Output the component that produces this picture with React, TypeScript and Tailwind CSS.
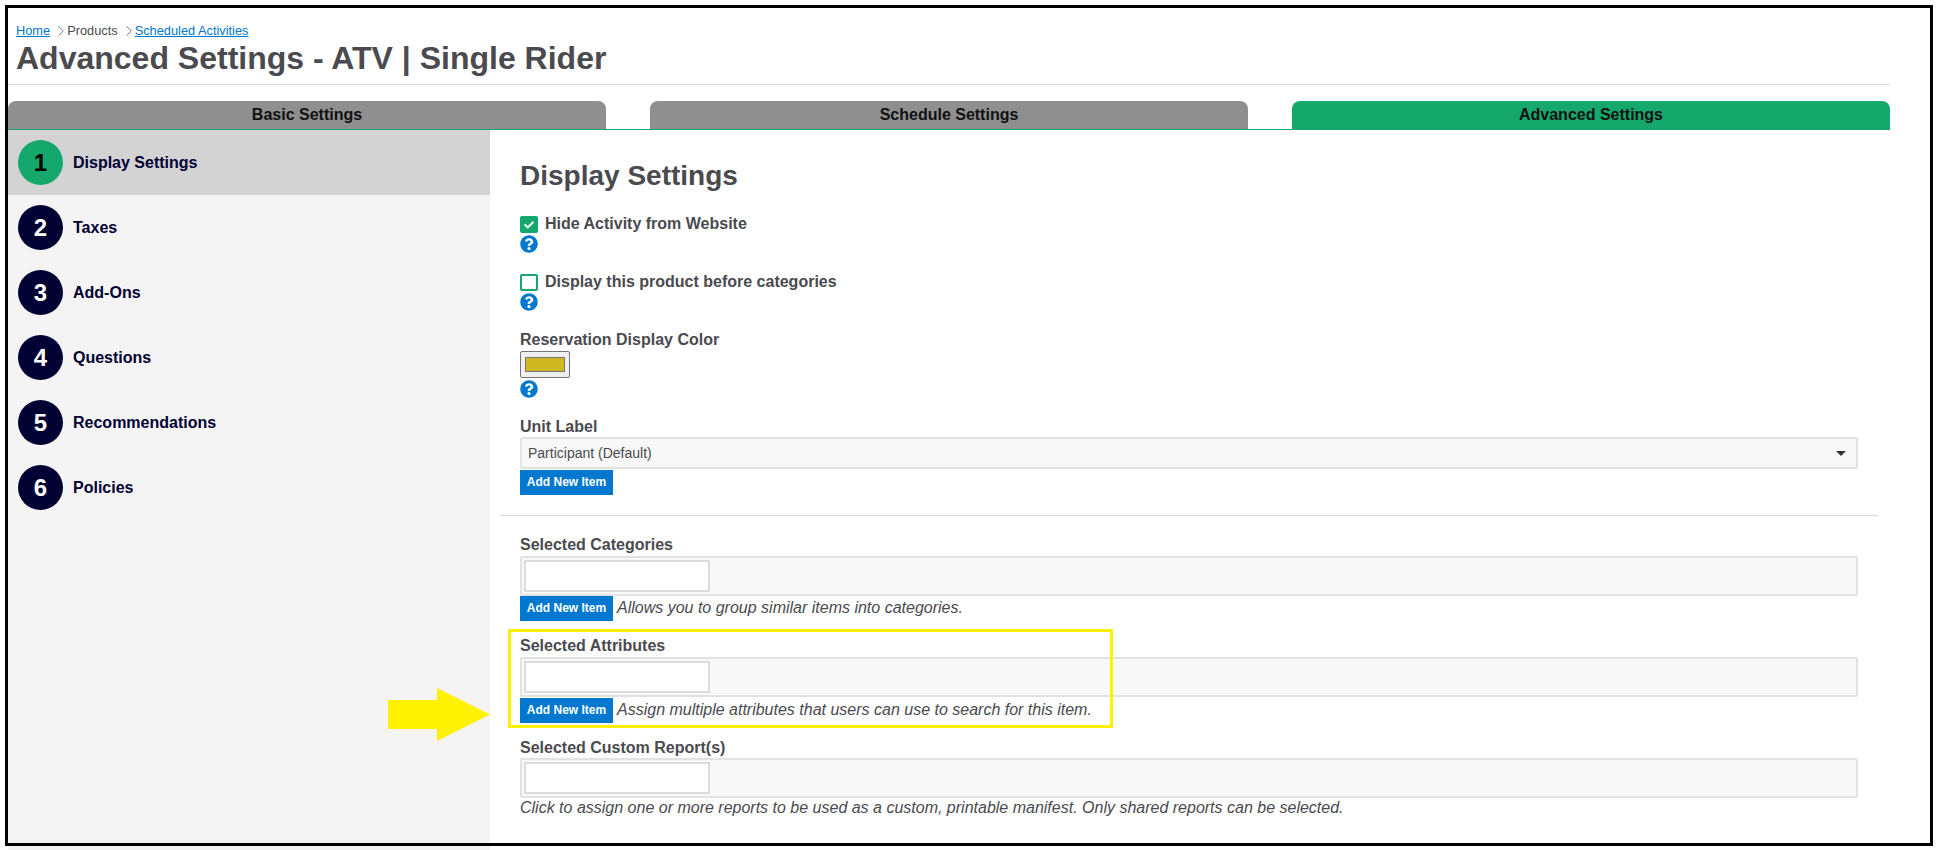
import { ChevronRight } from 'lucide-react';
import { FaCheck, FaQuestionCircle } from 'react-icons/fa';

const steps = ['Display Settings', 'Taxes', 'Add-Ons', 'Questions', 'Recommendations', 'Policies'];
const tabs = ['Basic Settings', 'Schedule Settings', 'Advanced Settings'];

function HelpIcon({ className = '' }: { className?: string }) {
  return <FaQuestionCircle className={`block text-[18px] text-[#0078cf] ${className}`} />;
}

function AddButton() {
  return (
    <button className="h-[25px] w-[93px] shrink-0 bg-[#0078cf] text-center text-[12px] font-bold text-white">
      Add New Item
    </button>
  );
}

function MultiSelect() {
  return (
    <div className="h-[40px] rounded-[2px] border-2 border-[#e2e2e2] bg-[#f8f8f8] py-[2px] pl-[2px]">
      <div className="h-[32px] w-[186px] border-2 border-[#dcdcdc] bg-white" />
    </div>
  );
}

export default function App() {
  return (
    <div className="relative h-[850px] w-[1936px] overflow-hidden bg-white font-['Liberation_Sans',Arial,sans-serif]">
      <div className="ml-2 w-[1882px]">
        {/* header */}
        <div className="pl-2 pt-[22px]">
          <div className="flex h-[18px] items-center text-[12.8px] text-[#4a4a4f]">
            <a className="text-[#0078cf] underline">Home</a>
            <ChevronRight size={18} strokeWidth={1.2} className="-mr-[3px] ml-[2px] text-[#666]" />
            <span>Products</span>
            <ChevronRight size={18} strokeWidth={1.2} className="-mr-[3px] ml-[2px] text-[#666]" />
            <a className="text-[#0078cf] underline">Scheduled Activities</a>
          </div>
          <h1 className="h-[40px] text-[32px] font-bold leading-[36px] text-[#4a4a4f]">
            Advanced Settings - ATV | Single Rider
          </h1>
        </div>
        <div className="mt-[4px] h-px bg-[#d4d4d4]" />

        {/* tabs */}
        <div className="mt-[16px] flex h-[29px] justify-between border-b border-[#15a86c]">
          {tabs.map((tab, i) => (
            <div
              key={tab}
              className={`flex w-[598px] items-center justify-center rounded-t-[8px] text-[16px] font-bold text-[#111] ${
                i === 2 ? 'bg-[#15a86c]' : 'bg-[#8f8f8f]'
              }`}
            >
              {tab}
            </div>
          ))}
        </div>

        <div className="flex">
          {/* sidebar */}
          <div className="h-[720px] w-[482px] shrink-0 bg-[#f4f4f4]">
            {steps.map((step, i) => (
              <div
                key={step}
                className={`flex h-[65px] items-center pl-[10px] ${i === 0 ? 'bg-[#d3d3d3]' : ''}`}
              >
                <div
                  className={`flex h-[45px] w-[45px] items-center justify-center rounded-full text-[24px] font-bold ${
                    i === 0 ? 'bg-[#15a86c] text-black' : 'bg-[#000033] text-white'
                  }`}
                >
                  {i + 1}
                </div>
                <span className="ml-[10px] text-[16px] font-bold text-[#000033]">{step}</span>
              </div>
            ))}
          </div>

          {/* form */}
          <div className="min-w-0 flex-1 pl-[30px] pr-[32px] pt-[31px] text-[#4a4a4f]">
            <h2 className="h-[30px] text-[28px] font-bold leading-[30px]">Display Settings</h2>

            <div className="mt-[25px] flex h-[17px] items-start">
              <div className="flex h-[17px] w-[18px] items-center justify-center rounded-[2px] bg-[#15a86c]">
                <FaCheck className="text-[10px] text-white" />
              </div>
              <label className="ml-[7px] text-[16px] font-bold leading-[16px]">Hide Activity from Website</label>
            </div>
            <HelpIcon className="mt-[2px]" />

            <div className="mt-[21px] flex h-[17px] items-start">
              <div className="h-[17px] w-[18px] rounded-[2px] border-2 border-[#15a86c] bg-white" />
              <label className="ml-[7px] text-[16px] font-bold leading-[16px]">
                Display this product before categories
              </label>
            </div>
            <HelpIcon className="mt-[2px]" />

            <label className="mt-[19px] block text-[16px] font-bold leading-[20px]">Reservation Display Color</label>
            <div className="mt-[1px] flex h-[27px] w-[50px] items-center justify-center rounded-[2px] border border-[#767676] bg-[#efefef]">
              <div className="h-[15px] w-[40px] border border-[#767676] bg-[#cfb81f]" />
            </div>
            <HelpIcon className="mt-[2px]" />

            <label className="mt-[19px] block text-[16px] font-bold leading-[20px]">Unit Label</label>
            <div className="flex h-[32px] items-center justify-between rounded-[2px] border-2 border-[#e2e2e2] bg-[#f8f8f8] pl-[6px] pr-[10px] pt-px text-[14px]">
              <span>Participant (Default)</span>
              <div className="h-0 w-0 border-x-[5px] border-t-[5px] border-x-transparent border-t-[#333]" />
            </div>
            <div>
              <AddButton />
            </div>

            <div className="-ml-[20px] -mr-[20px] mt-[20px] h-px bg-[#d4d4d4]" />

            <label className="mt-[19px] block text-[16px] font-bold leading-[20px]">Selected Categories</label>
            <div className="mt-[1px]">
              <MultiSelect />
            </div>
            <div className="flex items-center">
              <AddButton />
              <span className="ml-[4px] text-[16px] italic">Allows you to group similar items into categories.</span>
            </div>

            <label className="mt-[15px] block text-[16px] font-bold leading-[20px]">Selected Attributes</label>
            <div className="mt-[1px]">
              <MultiSelect />
            </div>
            <div className="mt-px flex items-center">
              <AddButton />
              <span className="ml-[4px] text-[16px] italic">
                Assign multiple attributes that users can use to search for this item.
              </span>
            </div>

            <label className="mt-[15px] block text-[16px] font-bold leading-[20px]">Selected Custom Report(s)</label>
            <div>
              <MultiSelect />
            </div>
            <p className="text-[16px] italic leading-[20px]">
              Click to assign one or more reports to be used as a custom, printable manifest. Only shared reports can be
              selected.
            </p>
          </div>
        </div>
      </div>

      {/* screenshot annotations */}
      <div className="pointer-events-none absolute left-[5px] top-[5px] h-[841px] w-[1928px] border-[3px] border-black" />
      <div className="pointer-events-none absolute left-[508px] top-[629px] h-[99px] w-[605px] border-[3px] border-[#fff200]" />
      <svg className="absolute left-[388px] top-[688px]" width="102" height="53" viewBox="0 0 102 53">
        <path d="M0 12H49V0L102 26.5L49 53V41H0Z" fill="#fff200" />
      </svg>
    </div>
  );
}
